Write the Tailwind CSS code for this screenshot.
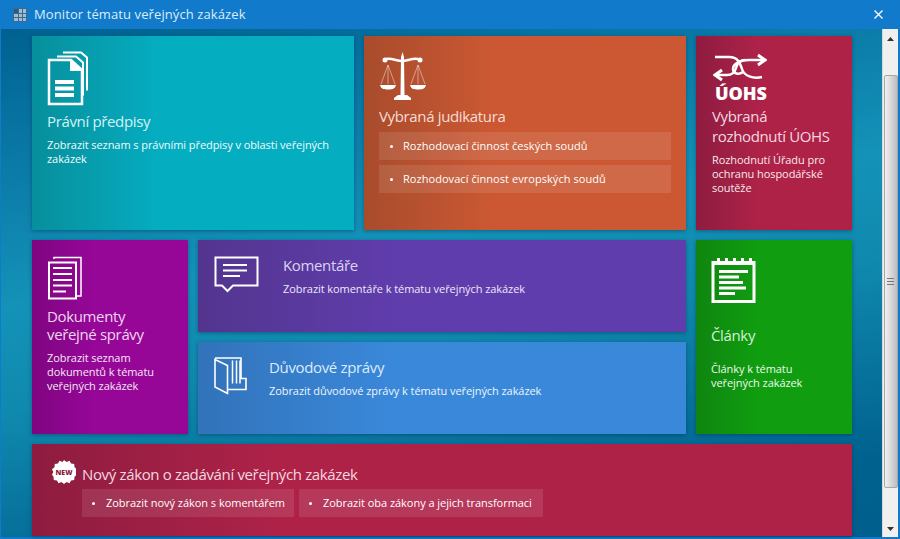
<!DOCTYPE html>
<html lang="cs">
<head>
    <meta charset="UTF-8">
    <title>Monitor tématu veřejných zakázek</title>
    <script src="https://cdn.jsdelivr.net/npm/@tailwindcss/browser@4"></script>
</head>
<body class="w-[900px] h-[539px] overflow-hidden bg-[#117acb] font-['Open_Sans','Noto_Sans',sans-serif] text-white">
    <!-- titulek okna -->
    <div class="h-[29px] flex items-center bg-[#117acb]">
        <svg class="ml-[13px] w-[14px] h-[14px]" viewBox="0 0 14 14">
            <rect width="14" height="14" fill="#3a6a90"/>
            <path d="M1 1h4v4H1z" fill="#2f5a80"/>
            <path d="M6 1h3v4H6zM10 1h3v4h-3zM1 6h4v3H1zM6 6h3v3H6zM10 6h3v3h-3zM1 10h4v3H1zM6 10h3v3H6zM10 10h3v3h-3z" fill="#a3bccf"/>
        </svg>
        <span class="ml-[7px] text-[13px] text-[#dcecf8] tracking-[0.1px]">Monitor tématu veřejných zakázek</span>
        <svg class="ml-auto mr-[17px] w-[9px] h-[9px]" viewBox="0 0 9 9"><path d="M.5.500l8 8M8.500.500l-8 8" stroke="#fff" stroke-width="1.300"/></svg>
    </div>

    <div class="h-[508px] ml-px mr-px flex">
        <!-- plocha -->
        <div class="w-[881px] h-full pl-[31px] pt-[7px] bg-[linear-gradient(170deg,#00618f_0%,#06709f_12%,#1492b8_42%,#1089ae_58%,#00618f_88%,#005f8c_100%)]">
            <div class="grid grid-cols-[repeat(5,156px)] grid-rows-[194px_92px_92px_92px] gap-[10px]">

                <div class="col-span-2 px-[15px] shadow-[0_1px_4px_rgba(0,40,70,0.45)] bg-[linear-gradient(90deg,#078f9c_0%,#05adc1_40%,#05adc1_100%)]">
                    <svg class="mt-[15px] w-[42px] h-[55px]" viewBox="0 0 42 55" fill="none">
                        <path d="M16 1.500h18l6 5v33" stroke="#fff" stroke-width="2"/>
                        <path d="M10 5.500h19l7 6v33" stroke="#fff" stroke-width="2"/>
                        <path d="M2 9h22l11 10v34H2z" stroke="#fff" stroke-width="2.500"/>
                        <path d="M23 8v12h12z" fill="#fff"/>
                        <path d="M8 29h19v4H8zM8 35.500h19v4H8zM8 42h19v4H8z" fill="#fff"/>
                    </svg>
                    <h2 class="mt-[5px] text-[15px] leading-[20px] tracking-[-0.35px] text-[#d5f1f5]">Právní předpisy</h2>
                    <p class="mt-[7px] text-[11px] leading-[14px] font-medium tracking-[-0.07px] text-[#f2fbfc]">Zobrazit seznam s právními předpisy v oblasti veřejných zakázek</p>
                </div>

                <div class="col-span-2 px-[15px] shadow-[0_1px_4px_rgba(0,40,70,0.45)] bg-[linear-gradient(90deg,#a84c2c_0%,#cb5833_40%,#cb5833_100%)]">
                    <svg class="mt-[15px] w-[48px] h-[50px]" viewBox="0 0 48 50" fill="none">
                        <path d="M23.500 1l1.500 5 .5 38h-4l.5-38z" fill="#fff"/>
                        <path d="M7 8c6-1 11 2 16 2s10-3 16-2" stroke="#fff" stroke-width="2.500"/>
                        <circle cx="6" cy="9" r="2.500" fill="#fff"/><circle cx="41" cy="9" r="2.500" fill="#fff"/>
                        <path d="M9 14L2 33M9 14l7 19M39 14l-7 19M39 14l7 19M9 14v19M39 14v19" stroke="#fff" stroke-opacity=".45"/>
                        <path d="M1 34h16c-1 4-4 4.500-8 4.500S2 38 1 34zM31 34h16c-1 4-4 4.500-8 4.500S32 38 31 34z" fill="#fff"/>
                        <path d="M19 44h9l4 3v2H15v-2z" fill="#fff"/>
                    </svg>
                    <h2 class="mt-[5px] text-[15px] leading-[20px] tracking-[-0.35px] text-[#f6ddd3]">Vybraná judikatura</h2>
                    <ul class="mt-[6px] space-y-[5px] text-[11px] font-medium tracking-[0.05px]">
                        <li class="h-[28px] flex items-center pt-px bg-white/10"><span class="w-[3px] h-[3px] ml-[11px] mr-[10px] rounded-full bg-white"></span>Rozhodovací činnost českých soudů</li>
                        <li class="h-[28px] flex items-center pt-px bg-white/10"><span class="w-[3px] h-[3px] ml-[11px] mr-[10px] rounded-full bg-white"></span>Rozhodovací činnost evropských soudů</li>
                    </ul>
                </div>

                <div class="px-[16px] shadow-[0_1px_4px_rgba(0,40,70,0.45)] bg-[linear-gradient(90deg,#8e1c40_0%,#ae2248_40%,#ae2248_100%)]">
                    <svg class="mt-[17px] ml-[1px] w-[54px] h-[28px]" viewBox="0 0 54 28" fill="none" stroke="#fff" stroke-width="2.500">
                        <path d="M2 4h14c9 0 11 6 13 12 2 7 11 10 20 8"/>
                        <path d="M51 7H36c-9 0-16 4-16 9 0 5 6 6 10 3"/>
                        <path d="M3 22h11c6 0 8-3 9-7 1-4 4-8 9-8"/>
                        <path d="M45 2l7 5-7 5" stroke-width="3"/>
                        <path d="M9 17l-7 5 7 5" stroke-width="3"/>
                    </svg>
                    <div class="mt-[2px] ml-[3px] text-[18px] leading-[20px] font-extrabold tracking-[-0.1px]">ÚOHS</div>
                    <h2 class="mt-[3px] text-[15px] leading-[20px] tracking-[-0.35px] text-[#f3d8e0]">Vybraná rozhodnutí ÚOHS</h2>
                    <p class="mt-[7px] text-[11px] leading-[14px] font-medium tracking-[-0.07px] text-[#f8e9ed]">Rozhodnutí Úřadu pro ochranu hospodářské soutěže</p>
                </div>

                <div class="row-span-2 px-[15px] shadow-[0_1px_4px_rgba(0,40,70,0.45)] bg-[linear-gradient(90deg,#7f0580_0%,#960798_40%,#960798_100%)]">
                    <svg class="mt-[16px] w-[36px] h-[44px]" viewBox="0 0 36 44" fill="none" stroke="#fff">
                        <path d="M7 3V1.500h27V40h-6" stroke-width="1.500"/>
                        <path d="M2 6.500h27v36H2z" stroke-width="2"/>
                        <path d="M6 12h19M6 18h19M6 24h19M6 29.500h19M6 35.500h13" stroke-width="1.800"/>
                    </svg>
                    <h2 class="mt-[7px] text-[15px] leading-[18px] tracking-[-0.35px] text-[#f0d5f0]">Dokumenty veřejné správy</h2>
                    <p class="mt-[8px] text-[11px] leading-[14px] font-medium tracking-[-0.07px] text-[#f6e8f6]">Zobrazit seznam dokumentů k tématu veřejných zakázek</p>
                </div>

                <div class="col-span-3 flex shadow-[0_1px_4px_rgba(0,40,70,0.45)] bg-[linear-gradient(90deg,#53358f_0%,#603dac_40%,#603dac_100%)]">
                    <svg class="mt-[16px] ml-[16px] w-[45px] h-[37px]" viewBox="0 0 45 37" fill="none" stroke="#fff">
                        <path d="M1.500 1.500h42v28H19l-5.500 5.500L8 29.500H1.500z" stroke-width="2"/>
                        <path d="M9 9h24M9 14.500h24M9 20h17" stroke-width="1.800"/>
                    </svg>
                    <div class="ml-[24px] mt-[15px]">
                        <h2 class="text-[15px] leading-[20px] tracking-[-0.35px] text-[#ddd3f0]">Komentáře</h2>
                        <p class="mt-[7px] text-[11px] leading-[14px] font-medium tracking-[-0.07px] text-[#eee8f8]">Zobrazit komentáře k tématu veřejných zakázek</p>
                    </div>
                </div>

                <div class="row-span-2 px-[15px] shadow-[0_1px_4px_rgba(0,40,70,0.45)] bg-[linear-gradient(90deg,#0f850f_0%,#109e10_40%,#109e10_100%)]">
                    <svg class="mt-[15px] w-[45px] h-[49px]" viewBox="0 0 45 49" fill="none">
                        <path d="M2 7.500h41v39H2z" stroke="#fff" stroke-width="3"/>
                        <path d="M1 6h43v4H1z" fill="#fff"/>
                        <path d="M6 3h3v7H6zM14 3h3v7h-3zM22 3h3v7h-3zM30 3h3v7h-3zM38 3h3v7h-3z" fill="#fff"/>
                        <path d="M8 15h29v3H8zM8 20.500h20v3H8zM8 26h24v3H8zM8 31.500h27v3H8zM8 37h16v3H8z" fill="#fff"/>
                    </svg>
                    <h2 class="mt-[21px] text-[15px] leading-[20px] tracking-[-0.35px] text-[#d5f0d5]">Články</h2>
                    <p class="mt-[17px] text-[11px] leading-[14px] font-medium tracking-[-0.07px] text-[#eef9ee]">Články k tématu veřejných zakázek</p>
                </div>

                <div class="col-span-3 flex shadow-[0_1px_4px_rgba(0,40,70,0.45)] bg-[linear-gradient(90deg,#3273ba_0%,#3a88da_40%,#3a88da_100%)]">
                    <svg class="mt-[15px] ml-[15px] w-[34px] h-[40px]" viewBox="0 0 34 40" fill="none" stroke="#fff">
                        <path d="M2 2.500l12.500 6v28L2 30z" stroke-width="1.600"/>
                        <path d="M2 1h26v20.500h5v11H14.500" stroke-width="1.600"/>
                        <path d="M19.500 3.500v23M23.500 3.500v23M27 3.500v23" stroke-width="1.500"/>
                    </svg>
                    <div class="ml-[22px] mt-[15px]">
                        <h2 class="text-[15px] leading-[20px] tracking-[-0.35px] text-[#dcebfa]">Důvodové zprávy</h2>
                        <p class="mt-[7px] text-[11px] leading-[14px] font-medium tracking-[-0.07px] text-[#eef5fc]">Zobrazit důvodové zprávy k tématu veřejných zakázek</p>
                    </div>
                </div>

                <div class="col-span-5 flex pl-[50px] relative shadow-[0_1px_4px_rgba(0,40,70,0.45)] bg-[linear-gradient(90deg,#8e1c40_0%,#ae2248_30%,#ae2248_100%)]">
                    <div class="absolute left-[20px] top-[16px] w-[24px] h-[24px] flex items-center justify-center">
                        <svg class="absolute inset-0 w-[24px] h-[24px]" viewBox="0 0 24 24"><path d="M12 0l2.500 2 3-1.200 1.500 2.800 3.200.4.300 3.200 2.500 2-1.300 2.800 1.300 2.800-2.500 2-.3 3.200-3.200.4-1.500 2.800-3-1.200-2.500 2-2.500-2-3 1.200-1.500-2.800-3.200-.4-.3-3.200L0 14.800l1.300-2.800L0 9.200l2.500-2 .3-3.200L6 3.600l1.500-2.800 3 1.200z" fill="#fff"/></svg>
                        <span class="relative text-[7px] leading-none font-extrabold text-[#8e1c40]">NEW</span>
                    </div>
                    <div>
                        <h2 class="mt-[20px] text-[15px] leading-[20px] tracking-[-0.35px] text-[#f3d8e0]">Nový zákon o zadávání veřejných zakázek</h2>
                        <ul class="mt-[5px] flex gap-[5px] text-[11px] font-medium tracking-[-0.03px] whitespace-nowrap">
                            <li class="h-[28px] w-[212px] flex items-center bg-white/10"><span class="w-[3px] h-[3px] ml-[10px] mr-[11px] rounded-full bg-white"></span>Zobrazit nový zákon s komentářem</li>
                            <li class="h-[28px] w-[244px] flex items-center bg-white/10"><span class="w-[3px] h-[3px] ml-[10px] mr-[11px] rounded-full bg-white"></span>Zobrazit oba zákony a jejich transformaci</li>
                        </ul>
                    </div>
                </div>
            </div>
        </div>

        <!-- posuvnik -->
        <div class="w-[16px] h-full flex flex-col items-center bg-[#f0f0f0] border-l border-[#d8d8d8]">
            <svg class="mt-[8px] w-[7px] h-[4px] shrink-0" viewBox="0 0 7 4"><path d="M3.500 0L7 4H0z" fill="#333"/></svg>
            <div class="mt-[34px] w-[14px] h-[413px] shrink-0 flex items-center justify-center rounded-[2px] border border-[#a8a8a8] bg-[linear-gradient(90deg,#f0f0f0_0%,#d8d8dc_50%,#bcbcc2_100%)]">
                <div class="w-[7px] h-[7px] border-y border-[#777] flex items-center"><div class="w-full h-px bg-[#777]"></div></div>
            </div>
            <svg class="mt-auto mb-[6px] w-[7px] h-[4px] shrink-0" viewBox="0 0 7 4"><path d="M3.500 4L7 0H0z" fill="#333"/></svg>
        </div>
    </div>
</body>
</html>
